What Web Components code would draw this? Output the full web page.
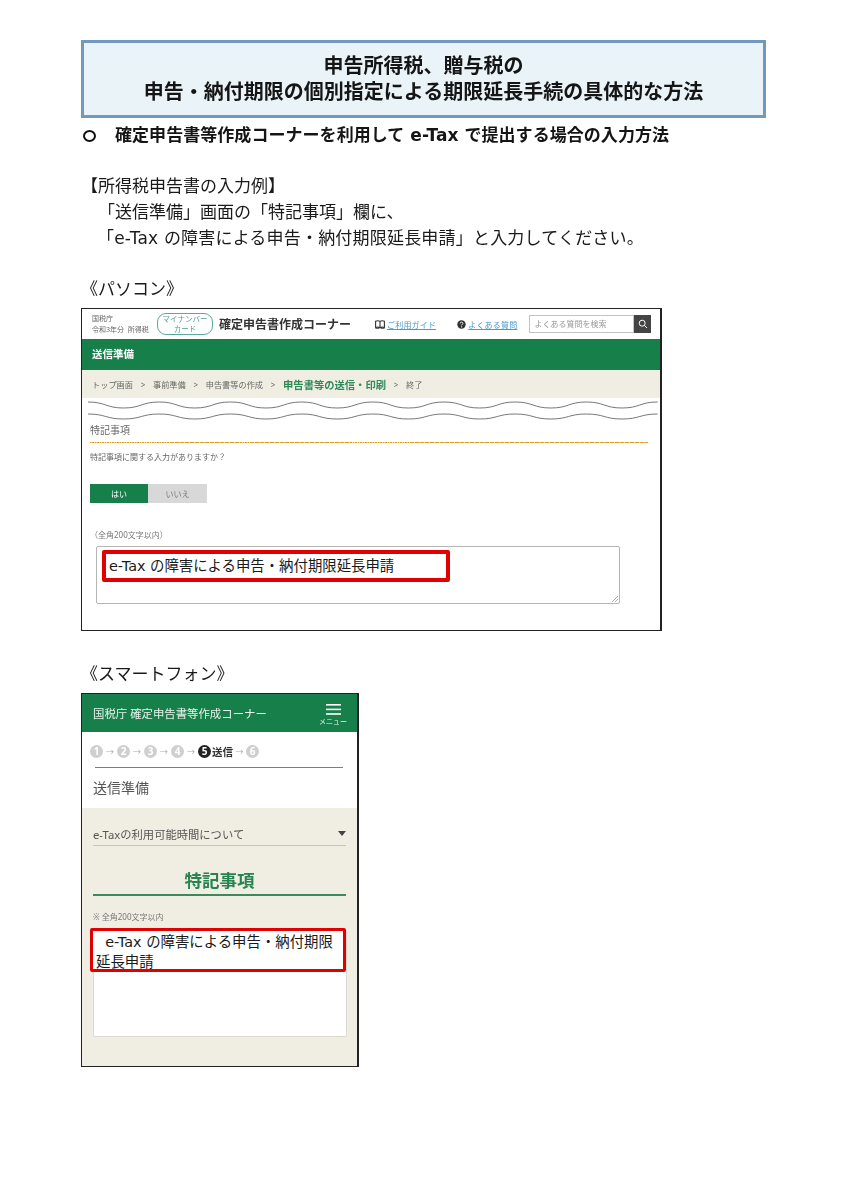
<!DOCTYPE html>
<html lang="ja"><head><meta charset="utf-8"><title>申告・納付期限の個別指定</title>
<style>
html,body{margin:0;padding:0;background:#fff;}
body{font-family:"DejaVu Sans","Noto Sans CJK JP",sans-serif;color:#111;}
</style></head><body>
<doc-page>
  <title-box><span>申告所得税、贈与税の</span><span>申告・納付期限の個別指定による期限延長手続の具体的な方法</span></title-box>
  <doc-bullet>確定申告書等作成コーナーを利用して e-Tax で提出する場合の入力方法</doc-bullet>
  <doc-line style="margin-top:26px;margin-left:0">【所得税申告書の入力例】</doc-line>
  <doc-line style="margin-left:17px">「送信準備」画面の「特記事項」欄に、</doc-line>
  <doc-line style="margin-left:16px;letter-spacing:.2px">「e-Tax の障害による申告・納付期限延長申請」と入力してください。</doc-line>
  <doc-line style="margin-top:25px;margin-bottom:6px">《パソコン》</doc-line>
  <pc-shot></pc-shot>
  <doc-line style="margin-top:30px;margin-bottom:6px">《スマートフォン》</doc-line>
  <sp-shot></sp-shot>
</doc-page>
<script>
function def(name, html){
  customElements.define(name, class extends HTMLElement{
    constructor(){super();this.attachShadow({mode:"open"}).innerHTML=html;}
  });
}
const CJK='"Noto Sans","Noto Sans CJK JP",sans-serif';
const MIX='"DejaVu Sans","Noto Sans CJK JP",sans-serif';
function wave(y,h){
  let d="M6 "+y;
  for(let i=0;i<8;i++){ d+=" c17.8 0 17.8 "+h+" 35.6 "+h+" c17.8 0 17.8 "+(-h)+" 35.6 "+(-h); }
  return d;
}
def("doc-page",`<style>:host{display:block;box-sizing:border-box;width:848px;height:1200px;padding:40px 82px 0 81px;font-family:${MIX};filter:blur(.3px);}</style><slot></slot>`);
def("title-box",`<style>:host{display:flex;flex-direction:column;align-items:center;justify-content:center;box-sizing:border-box;height:78px;border:3px solid #7198bd;background:#eaf3f8;font-family:${CJK};font-size:20px;line-height:26px;font-weight:700;color:#151515;}
::slotted(span){display:block;}</style><slot></slot>`);
def("doc-bullet",`<style>:host{display:flex;align-items:center;height:24px;margin-top:5px;font-size:17px;font-weight:700;color:#151515;white-space:nowrap;}
i{box-sizing:border-box;width:13px;height:12px;border:2.5px solid #111;border-radius:50%;margin:1px 19px 0 2px;flex:none;}
span{display:block;letter-spacing:.05px;margin-top:-3px;}
</style><i></i><span><slot></slot></span>`);
def("doc-line",`<style>:host{display:block;height:26px;line-height:26px;font-size:17px;color:#1a1a1a;white-space:nowrap;}</style><slot></slot>`);

def("wavy-rule",`<style>:host{display:block;height:30px;}svg{display:block;}</style>
<svg width="579" height="30" viewBox="0 0 579 30" fill="none" stroke="#555" stroke-width=".8">
<path d="${wave(4,6)}"/><path d="${wave(16,5)}"/></svg>`);

def("pc-shot",`<style>
:host{display:block;box-sizing:border-box;width:581px;height:323px;border:1px solid #222;border-right-width:2px;background:#fff;color:#555;font-family:${CJK};}
.head{display:flex;align-items:center;height:30px;padding-left:10px;}
.who{font-size:7px;line-height:11px;width:65px;flex:none;color:#666;}
.who div{white-space:nowrap}
.badge{box-sizing:border-box;width:56px;height:22px;border:1px solid #5aa99a;border-radius:9px;color:#4b9f90;font-size:7.5px;line-height:10.5px;text-align:center;display:flex;flex-direction:column;justify-content:center;flex:none;}
.ttl{font-size:12px;font-weight:700;color:#333;margin-left:6px;width:156px;flex:none;white-space:nowrap;}
.link{font-size:8px;color:#4a9ad0;text-decoration:underline;white-space:nowrap;letter-spacing:.2px;}
.ic{flex:none;display:block;}
.search{display:flex;height:18px;margin-left:12px;}
.search b{box-sizing:border-box;width:105px;border:1px solid #c4c4c4;font-weight:400;font-size:8px;line-height:16px;color:#999;padding-left:4px;}
.search span{width:17px;background:#444;display:flex;align-items:center;justify-content:center;}
.band{height:31px;background:#17804a;color:#fff;font-size:10.5px;font-weight:700;line-height:31px;padding-left:10px;}
.crumb{display:flex;align-items:center;height:28px;background:#f0eee3;padding-left:10px;font-size:8.2px;white-space:nowrap;color:#666;}
.crumb i{font-style:normal;width:20px;text-align:center;font-size:8px;flex:none;}
.crumb b{font-size:10.3px;color:#2f8a58;}
.body{padding:0 12px 0 8px;}
.sub{font-size:10px;line-height:14px;color:#666;margin-top:-5px;}
.dots{height:1px;margin-top:5px;background:repeating-linear-gradient(90deg,#dc9c20 0 1.5px,#f3d59a 1.5px 2.5px);}
.q{font-size:8px;line-height:12px;margin-top:8px;color:#666;}
.yn{display:flex;margin-top:21px;height:19px;font-size:8px;line-height:19px;text-align:center;}
.yn b{font-weight:400;width:58px;background:#17804a;color:#fff;}
.yn u{text-decoration:none;width:59px;background:#d8d8d8;color:#777;}
.lim{font-size:8px;line-height:12px;margin-top:26px;color:#777;}
.ta{position:relative;box-sizing:border-box;width:524px;height:58px;margin:5px 0 0 6px;border:1px solid #b5b5b5;border-radius:2px;}
.ta svg{position:absolute;right:0;bottom:0;}
.red{position:absolute;left:5px;top:3px;box-sizing:border-box;width:348px;height:32px;border:4px solid #e00000;border-radius:2px;background:#fff;font-family:${MIX};font-size:14.4px;line-height:24px;padding-left:3px;color:#1a1a1a;white-space:nowrap;}
</style>
<div class="head">
  <div class="who"><div>国税庁</div><div>令和3年分&nbsp;&nbsp;所得税</div></div>
  <div class="badge"><div>マイナンバー</div><div>カード</div></div>
  <div class="ttl">確定申告書作成コーナー</div>
  <svg class="ic" width="10" height="9" viewBox="0 0 10 9" fill="none" stroke="#333" stroke-width="1.1" style="margin-right:2px"><path d="M.6 1.2C2 .6 3.8.6 5 1.4 6.2.6 8 .6 9.4 1.2V7.6C8 7 6.2 7 5 7.8 3.8 7 2 7 .6 7.6zM5 1.4V7.8"/><path d="M.6 8.6h3.6M5.8 8.6h3.6" stroke-width=".8"/></svg>
  <span class="link">ご利用ガイド</span>
  <svg class="ic" width="9" height="9" viewBox="0 0 9 9" style="margin:0 2px 0 21px"><circle cx="4.5" cy="4.5" r="4.2" fill="#333"/><path d="M3.2 3.4c0-1.7 2.7-1.6 2.7 0 0 1-1.3 1-1.3 2" fill="none" stroke="#fff" stroke-width=".9"/><circle cx="4.6" cy="6.8" r=".6" fill="#fff"/></svg>
  <span class="link">よくある質問</span>
  <div class="search"><b>よくある質問を検索</b><span><svg width="10" height="10" viewBox="0 0 10 10" fill="none" stroke="#fff" stroke-width="1"><circle cx="4.2" cy="4.2" r="3"/><path d="M6.4 6.4L9 9"/></svg></span></div>
</div>
<div class="band">送信準備</div>
<div class="crumb"><span>トップ画面</span><i>&gt;</i><span>事前準備</span><i>&gt;</i><span>申告書等の作成</span><i>&gt;</i><b>申告書等の送信・印刷</b><i>&gt;</i><span>終了</span></div>
<wavy-rule></wavy-rule>
<div class="body">
  <div class="sub">特記事項</div>
  <div class="dots"></div>
  <div class="q">特記事項に関する入力がありますか？</div>
  <div class="yn"><b>はい</b><u>いいえ</u></div>
  <div class="lim">（全角200文字以内）</div>
  <div class="ta"><div class="red">e-Tax の障害による申告・納付期限延長申請</div>
    <svg width="8" height="8" viewBox="0 0 8 8" stroke="#999" stroke-width=".8"><path d="M1 7L7 1M4 7L7 4"/></svg></div>
</div>`);

def("step-dot",`<style>:host{display:inline-block;width:13px;height:13px;border-radius:50%;background:#cfcfcf;color:#fff;font-size:10px;line-height:13px;text-align:center;font-weight:700;flex:none;}
:host([on]){background:#222;}</style><slot></slot>`);

def("sp-shot",`<style>
:host{display:block;box-sizing:border-box;width:278px;height:374px;border:1px solid #222;border-width:1px 2px 2px 1px;background:#fff;font-family:${CJK};color:#555;}
.head{display:flex;align-items:center;justify-content:space-between;height:38px;background:#17804a;color:#e8f3ec;padding-left:11px;padding-right:9px;font-size:11.4px;}
.menu{display:flex;flex-direction:column;align-items:center;gap:3px;width:30px;font-size:7px;line-height:8px;padding-top:3px;}
.menu svg{display:block;}
.steps{display:flex;align-items:center;height:35px;padding:3px 0 0 8px;box-sizing:border-box;font-size:10px;color:#aaa;white-space:nowrap;}
.steps i{font-style:normal;width:14px;text-align:center;font-size:8px;flex:none;}
.steps i.n{width:13px}
.steps b{color:#333;font-size:10.5px;margin-left:1px;}
.rule{height:0;border-top:1px solid #4a9a6c;margin:0 14px 0 13px;}
.h{font-size:14px;line-height:20px;padding:10px 0 9px 11px;color:#555;height:21px;}
.panel{background:#f0eee3;height:258px;box-sizing:border-box;padding:0 11px;}
.sel{display:flex;justify-content:space-between;align-items:center;height:38px;box-sizing:border-box;padding-top:14px;font-size:11.3px;color:#555;border-bottom:1px solid #c9c6b6;}
.g{font-size:17.5px;line-height:24px;font-weight:700;color:#27834f;text-align:center;margin-top:22px;padding-bottom:2px;border-bottom:2px solid #3c8a5c;}
.note{font-size:8px;line-height:12px;margin-top:15px;color:#777;}
.ta{position:relative;height:106px;margin-top:6px;background:#fff;border:1px solid #dcdad0;border-radius:2px;width:252px;}
.red{position:absolute;left:-4px;top:-2px;box-sizing:border-box;width:256px;height:44px;border:3.5px solid #e00000;border-radius:2px;background:#fff;font-family:${MIX};font-size:14.4px;line-height:20px;padding:.5px 0 0 3px;color:#1a1a1a;}
.red span{display:block;white-space:nowrap}
</style>
<div class="head"><span>国税庁 確定申告書等作成コーナー</span>
  <div class="menu"><svg width="15" height="11" viewBox="0 0 15 11" fill="#fff"><rect width="15" height="1.6"/><rect y="4.6" width="15" height="1.6"/><rect y="9.2" width="15" height="1.6"/></svg><span>メニュー</span></div></div>
<div class="steps"><step-dot>1</step-dot><i>→</i><step-dot>2</step-dot><i>→</i><step-dot>3</step-dot><i>→</i><step-dot>4</step-dot><i>→</i><step-dot on>5</step-dot><b>送信</b><i class="n">→</i><step-dot>6</step-dot></div>
<div class="rule"></div>
<div class="h">送信準備</div>
<div class="panel">
  <div class="sel"><span>e-Taxの利用可能時間について</span><svg width="8" height="5" viewBox="0 0 8 5"><path d="M0 0h8L4 5z" fill="#444"/></svg></div>
  <div class="g">特記事項</div>
  <div class="note">※ 全角200文字以内</div>
  <div class="ta"><div class="red"><span>&nbsp;&nbsp;e-Tax の障害による申告・納付期限</span><span>延長申請</span></div></div>
</div>`);
</script>
</body></html>
